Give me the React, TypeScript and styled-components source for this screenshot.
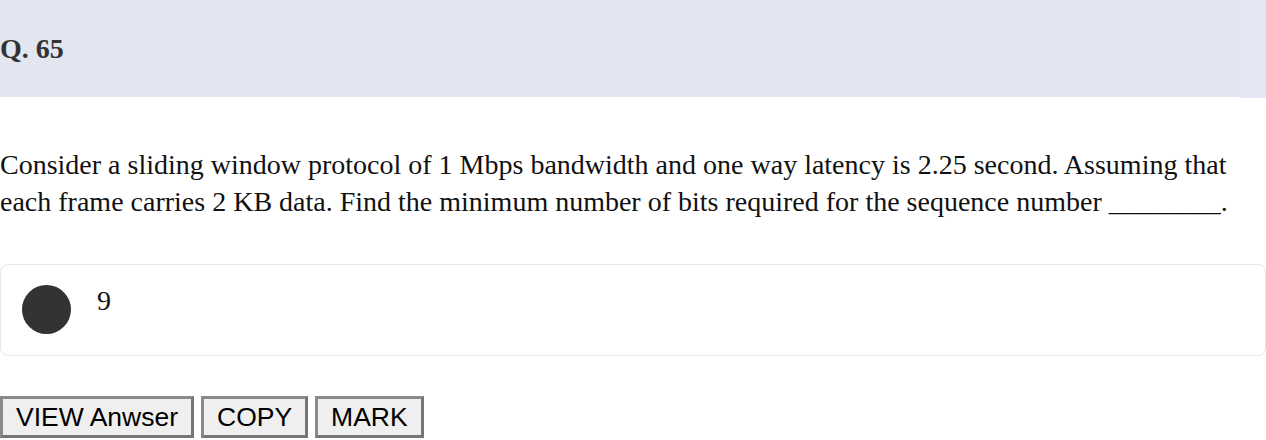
import React from "react";
import styled, { createGlobalStyle } from "styled-components";

const Global = createGlobalStyle`
  html, body { margin: 0; padding: 0; background: #fff; }
  body { font-family: "Liberation Serif", "Times New Roman", serif; color: #111; overflow: hidden; }
`;

const Page = styled.div`
  width: 1266px;
  display: flex;
  flex-direction: column;
`;

const HeaderRow = styled.div`
  display: flex;
  height: 97px;
`;

const Header = styled.div`
  flex: 1;
  background: #e3e6f0;
  display: flex;
  align-items: center;
`;

const HeaderEdge = styled.div`
  width: 26px;
  height: 98px;
  background: #e4e6f3;
`;

const Title = styled.h2`
  margin: 0;
  font-size: 28px;
  font-weight: bold;
  color: #333;
  padding-top: 1px;
`;

const Question = styled.p`
  margin: 49px 0 0;
  font-size: 28px;
  line-height: 37px;
  color: #111;
`;

const Option = styled.div`
  margin-top: 44px;
  height: 92px;
  border: 1px solid #e6e6e6;
  border-radius: 8px;
  display: flex;
  align-items: flex-start;
  padding: 20px 21px;
  box-sizing: border-box;
  gap: 26px;
`;

const Dot = styled.span`
  width: 49px;
  height: 49px;
  border-radius: 50%;
  background: #333;
  flex-shrink: 0;
`;

const OptionText = styled.span`
  font-size: 28px;
  line-height: 32px;
  color: #111;
`;

const Actions = styled.div`
  display: flex;
  gap: 7px;
  margin-top: 40px;
`;

const Btn = styled.button`
  font-family: "Liberation Sans", Arial, sans-serif;
  font-size: 26.5px;
  height: 42px;
  padding: 0 13px;
  background: #efefef;
  color: #000;
  border: 3px solid;
  border-color: #8a8a8a #767676 #767676 #8a8a8a;
  box-sizing: border-box;
`;

export default function App() {
  return (
    <Page>
      <Global />
      <HeaderRow>
        <Header>
          <Title>Q. 65</Title>
        </Header>
        <HeaderEdge />
      </HeaderRow>
      <Question>
        Consider a sliding window protocol of 1 Mbps bandwidth and one way latency is 2.25 second. Assuming that
        <br />
        each frame carries 2 KB data. Find the minimum number of bits required for the sequence number ________.
      </Question>
      <Option>
        <Dot />
        <OptionText>9</OptionText>
      </Option>
      <Actions>
        <Btn>VIEW Anwser</Btn>
        <Btn>COPY</Btn>
        <Btn>MARK</Btn>
      </Actions>
    </Page>
  );
}
